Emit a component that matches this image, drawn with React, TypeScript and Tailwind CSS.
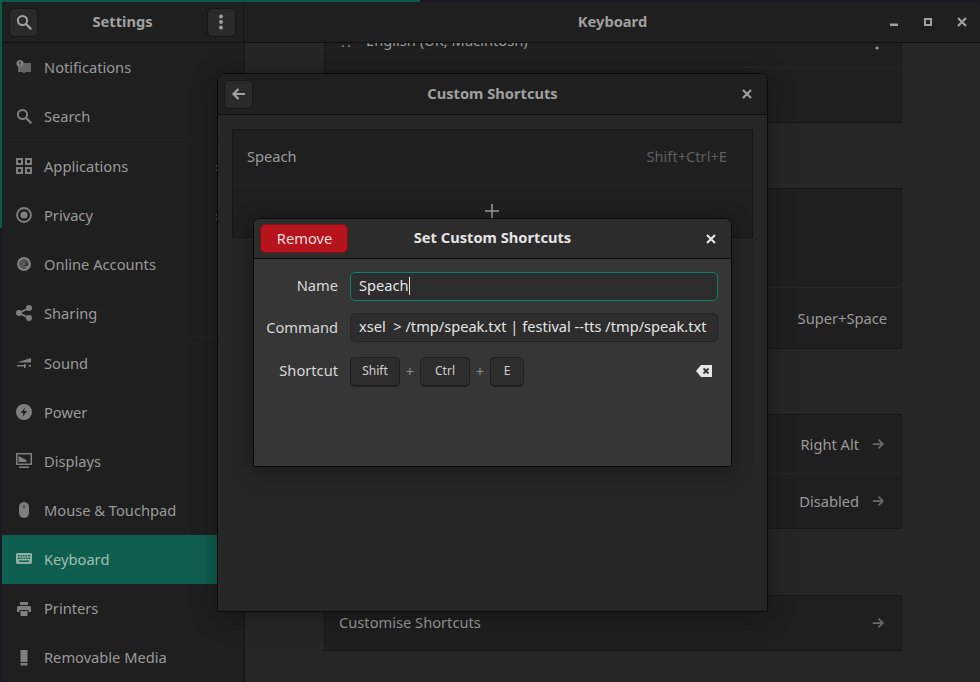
import React from 'react';

const Ico = ({ children, className = 'w-4 h-4' }: { children: React.ReactNode; className?: string }) => (
  <svg viewBox="0 0 16 16" className={className} fill="currentColor">
    {children}
  </svg>
);

const SearchIco = () => (
  <Ico>
    <circle cx="6.5" cy="6.5" r="4.6" fill="none" stroke="currentColor" strokeWidth="2" />
    <path d="M10 10l4.6 4.6" stroke="currentColor" strokeWidth="2.2" strokeLinecap="round" />
  </Ico>
);

const ArrowRight = ({ className = 'w-4 h-4' }: { className?: string }) => (
  <Ico className={className}>
    <path d="M2 8h11M8.500 3l5 5-5 5" fill="none" stroke="currentColor" strokeWidth="2" />
  </Ico>
);

const ArrowLeft = ({ className = 'w-4 h-4' }: { className?: string }) => (
  <Ico className={className}>
    <path d="M14 8H3M7.500 3l-5 5 5 5" fill="none" stroke="currentColor" strokeWidth="2.200" />
  </Ico>
);

const CloseIco = ({ className = 'w-3 h-3' }: { className?: string }) => (
  <svg viewBox="0 0 12 12" className={className}>
    <path d="M2 2l8 8M10 2l-8 8" stroke="currentColor" strokeWidth="2.200" />
  </svg>
);

const icons: Record<string, React.ReactNode> = {
  Notifications: (
    <Ico>
      <path d="M2 3h13v9H9.500L8 13.500 6.500 12H2z" opacity="0.75" />
      <circle cx="4" cy="3.500" r="3.500" />
      <path d="M3.500 1.500h1v2.600h-1zM3.500 4.700h1v1h-1z" fill="#1f1f1f" />
    </Ico>
  ),
  Search: <SearchIco />,
  Applications: (
    <Ico>
      <path
        fillRule="evenodd"
        d="M0 0h7v7H0zM2 2v3h3V2zM9 0h7v7H9zM11 2v3h3V2zM0 9h7v7H0zM2 11v3h3v-3zM9 9h7v7H9zM11 11v3h3v-3z"
      />
    </Ico>
  ),
  Privacy: (
    <Ico>
      <circle cx="8" cy="8" r="7" fill="none" stroke="currentColor" strokeWidth="1.800" />
      <circle cx="8" cy="8" r="3.600" />
    </Ico>
  ),
  'Online Accounts': (
    <Ico>
      <circle cx="8" cy="8" r="7" />
      <circle cx="8" cy="8" r="2" fill="none" stroke="#1f1f1f" strokeWidth="1" />
      <path d="M10 6v3c0 1.400 2 1 2-1a4 4 0 1 0-2 3.500" fill="none" stroke="#1f1f1f" strokeWidth="1" />
    </Ico>
  ),
  Sharing: (
    <Ico>
      <circle cx="3" cy="8" r="3" />
      <circle cx="13" cy="3" r="3" />
      <circle cx="13" cy="13" r="3" />
      <path d="M3 8l10-5M3 8l10 5" stroke="currentColor" strokeWidth="1.800" />
    </Ico>
  ),
  Sound: (
    <Ico>
      <path d="M1 7.500L15 3v4.500zM1 10h9v1.600H1zM8 9h1.500v4H8zM12.500 10H15v1.600h-2.500z" />
    </Ico>
  ),
  Power: (
    <Ico>
      <path
        fillRule="evenodd"
        d="M8 0a8 8 0 1 1 0 16A8 8 0 0 1 8 0zM9.500 3L4.800 9h2.600l-1 4 4.800-6H7.900z"
      />
    </Ico>
  ),
  Displays: (
    <Ico>
      <path fillRule="evenodd" d="M0 0h16v12H0zM1.500 1.500v9h13v-9z" />
      <path d="M2.500 3l8 4v2h-8zM3 13.500h10V15H3z" />
    </Ico>
  ),
  'Mouse & Touchpad': (
    <Ico>
      <rect x="3" y="0" width="10" height="16" rx="5" />
      <rect x="7.500" y="3" width="1" height="3" fill="#1f1f1f" />
    </Ico>
  ),
  Keyboard: (
    <Ico>
      <path
        fillRule="evenodd"
        d="M1.500 2h13A1.500 1.500 0 0 1 16 3.500v8a1.500 1.500 0 0 1-1.500 1.500h-13A1.500 1.500 0 0 1 0 11.500v-8A1.500 1.500 0 0 1 1.500 2zM2 4v1.500h1.500V4zM4.500 4v1.500H6V4zM7 4v1.500h1.500V4zM9.500 4v1.500H11V4zM12 4v1.500h2V4zM2 6.500V8h2V6.500zM5 6.500V8h1.500V6.500zM7.500 6.500V8H9V6.500zM10 6.500V8h1.500V6.500zM12.500 6.500V8H14V6.500zM3 9.500V11h10V9.500z"
      />
    </Ico>
  ),
  Printers: (
    <Ico>
      <path d="M4 1h8v3H4zM2.500 5h11A1.500 1.500 0 0 1 15 6.500V11h-2.500V9h-9v2H1V6.500A1.500 1.500 0 0 1 2.500 5zM4.500 10h7v5h-7z" />
    </Ico>
  ),
  'Removable Media': (
    <Ico>
      <path d="M4.500 0h7v12h-7zM4.500 13h7v1.500a1 1 0 0 1-1 1h-5a1 1 0 0 1-1-1z" />
    </Ico>
  ),
};

const items = [
  { name: 'Notifications', up: true },
  { name: 'Search', sep: true },
  { name: 'Applications', more: true },
  { name: 'Privacy', more: true },
  { name: 'Online Accounts' },
  { name: 'Sharing', sep: true },
  { name: 'Sound' },
  { name: 'Power' },
  { name: 'Displays' },
  { name: 'Mouse & Touchpad' },
  { name: 'Keyboard', active: true },
  { name: 'Printers', up: true },
  { name: 'Removable Media', up: true },
];

const HeaderButton = ({ children, className = '' }: { children: React.ReactNode; className?: string }) => (
  <div
    className={`w-[29px] h-[29px] rounded-[5px] bg-[#2a2a2a] border border-[#171717] flex items-center justify-center text-[#a0a0a0] ${className}`}
  >
    {children}
  </div>
);

const Row = ({ h, label, value, arrow, border = true }: { h: string; label?: string; value?: string; arrow?: boolean; border?: boolean }) => (
  <div className={`flex items-center justify-between pl-[14px] ${arrow ? 'pr-[16px]' : 'pr-[14px]'} ${h} ${border ? 'border-b border-[#262626]' : ''}`}>
    <span className="-mt-[2px]">{label}</span>
    <span className="flex items-center gap-[12px] pl-[1px]">
      {value}
      {arrow && <ArrowRight className="w-[14px] h-[14px] text-[#6a6a6a]" />}
    </span>
  </div>
);

const KeyCap = ({ label, w }: { label: string; w: string }) => (
  <div
    className={`${w} h-[30px] rounded-[5px] bg-[#2d2d2d] border border-[#1f1f1f] border-b-2 flex items-center justify-center pb-[1px] text-[12px] text-[#d0d0d0]`}
  >
    {label}
  </div>
);

export default function App() {
  return (
    <div className="relative w-[980px] h-[682px] overflow-hidden bg-[#1a1a20] font-['Noto_Sans',sans-serif] text-[14.67px] text-[#9a9a9a]">
      <div className="absolute left-0 top-0 w-[420px] h-[2px] bg-[#0a5a4a]" />
      <div className="absolute left-0 top-0 w-[2px] h-[228px] bg-[#0a5a4a]" />

      {/* main window */}
      <div className="relative ml-[2px] mt-[2px] h-[680px] flex flex-col rounded-t-[8px] overflow-hidden bg-[#262626]">
        <header className="h-[41px] shrink-0 flex bg-[#1f1f1f] border-b border-[#0e0e0e]">
          <div className="w-[242px] shrink-0 flex items-center justify-between px-[7px] border-r border-[#141414]">
            <HeaderButton>
              <SearchIco />
            </HeaderButton>
            <span className="font-bold text-[#a0a0a0] -mt-[2px]">Settings</span>
            <HeaderButton>
              <svg viewBox="0 0 16 16" className="w-4 h-4" fill="currentColor">
                <circle cx="8" cy="2.500" r="1.900" />
                <circle cx="8" cy="8" r="1.900" />
                <circle cx="8" cy="13.500" r="1.900" />
              </svg>
            </HeaderButton>
          </div>
          <div className="flex-1 flex items-center justify-center relative pl-[1px]">
            <span className="font-bold text-[#a0a0a0] -mt-[2px]">Keyboard</span>
            <div className="absolute right-[12px] top-[14px] flex items-center gap-[22px] text-[#a0a0a0]">
              <svg viewBox="0 0 12 12" className="w-3 h-3">
                <rect x="2" y="7.500" width="8" height="2.500" fill="currentColor" />
              </svg>
              <svg viewBox="0 0 12 12" className="w-3 h-3">
                <rect x="3" y="3" width="6" height="6" fill="none" stroke="currentColor" strokeWidth="2" />
              </svg>
              <CloseIco />
            </div>
          </div>
        </header>

        <div className="flex-1 flex min-h-0">
          <aside className="w-[243px] shrink-0 bg-[#1f1f1f] border-r border-[#141414] flex flex-col">
            {items.map((it) => (
              <div
                key={it.name}
                className={`h-[49.2px] shrink-0 flex items-center pl-[14px] pr-[24px] ${it.active ? 'bg-[#0f5f50] text-[#a3bdb5]' : ''} ${it.sep ? 'border-b border-[#232323]' : ''}`}
              >
                <span className={it.active ? 'text-[#8fb0a6]' : 'text-[#7f7f7f]'}>{icons[it.name]}</span>
                <span className={`ml-[12px] flex-1 ${it.up ? '-mt-[2px]' : ''}`}>{it.name}</span>
                {it.more && <span className="text-[#8a8a8a]">›</span>}
              </div>
            ))}
          </aside>

          <main className="flex-1 min-w-0 overflow-hidden pl-[79px] pr-[78px]">
            <div className="-mt-[30px] h-[110px] bg-[#1f1f1f] border border-[#171717] flex flex-col">
              <div className="h-[54px] flex items-center justify-between pl-[14px] pr-[21px] border-b border-[#262626]">
                <span className="flex items-center gap-[13px] -mt-[2px]">
                  <svg viewBox="0 0 14 14" className="w-[14px] h-[14px]" fill="#6a6a6a">
                    <circle cx="4" cy="3" r="1.200" />
                    <circle cx="10" cy="3" r="1.200" />
                    <circle cx="4" cy="8" r="1.200" />
                    <circle cx="10" cy="8" r="1.200" />
                    <circle cx="4" cy="13" r="1.200" />
                    <circle cx="10" cy="13" r="1.200" />
                  </svg>
                  English (UK, Macintosh)
                </span>
                <svg viewBox="0 0 6 18" className="w-[6px] h-[18px] text-[#a0a0a0]" fill="currentColor">
                  <circle cx="3" cy="2" r="1.500" />
                  <circle cx="3" cy="9" r="1.500" />
                  <circle cx="3" cy="16" r="1.500" />
                </svg>
              </div>
            </div>
            <div className="mt-[65px] h-[161px] bg-[#1f1f1f] border border-[#171717] flex flex-col">
              <Row h="h-[99px]" />
              <Row h="flex-1" value="Super+Space" border={false} />
            </div>
            <div className="mt-[65px] h-[115px] bg-[#1f1f1f] border border-[#171717] flex flex-col">
              <Row h="h-[59px]" value="Right Alt" arrow />
              <Row h="flex-1" value="Disabled" arrow border={false} />
            </div>
            <div className="mt-[66px] h-[56px] bg-[#1f1f1f] border border-[#171717] flex flex-col">
              <Row h="flex-1" label="Customise Shortcuts" arrow border={false} />
            </div>
          </main>
        </div>
      </div>

      {/* Custom Shortcuts dialog */}
      <div className="absolute left-[217px] top-[73px] w-[551px] h-[539px] rounded-t-[7px] border border-[#0a0a0a] bg-[#262626] shadow-[0_4px_24px_rgba(0,0,0,0.35)] overflow-hidden flex flex-col">
        <div className="h-[41px] shrink-0 grid grid-cols-[1fr_auto_1fr] items-center pl-[6px] pr-[6px] bg-[#1f1f1f] border-b border-[#0e0e0e]">
          <HeaderButton>
            <ArrowLeft />
          </HeaderButton>
          <span className="font-bold text-[#a0a0a0] -mt-[3px]">Custom Shortcuts</span>
          <div className="flex justify-end pr-[8px] text-[#a0a0a0]">
            <CloseIco />
          </div>
        </div>
        <div className="px-[14px] pt-[14px]">
          <div className="h-[109px] bg-[#1f1f1f] border border-[#171717] flex flex-col">
            <div className="h-[55px] flex items-center justify-between pl-[14px] pr-[25px] border-b border-[#222222]">
              <span className="-mt-[2px]">Speach</span>
              <span className="text-[#5f5f5f] -mt-[2px]">Shift+Ctrl+E</span>
            </div>
            <div className="flex-1 flex justify-center pt-[19px] pr-[1px] text-[#a0a0a0]">
              <svg viewBox="0 0 14 14" className="w-[14px] h-[14px]">
                <path d="M7 0v14M0 7h14" stroke="currentColor" strokeWidth="1.500" />
              </svg>
            </div>
          </div>
        </div>
      </div>

      {/* Set Custom Shortcuts dialog */}
      <div className="absolute left-[253px] top-[218px] w-[479px] h-[249px] rounded-t-[7px] border border-[#0a0a0a] bg-[#363636] shadow-[0_4px_20px_rgba(0,0,0,0.4)] overflow-hidden flex flex-col text-[#d8d8d8]">
        <div className="h-[40px] shrink-0 grid grid-cols-[1fr_auto_1fr] items-center px-[6px] bg-[#2c2c2c] border-b border-[#0e0e0e]">
          <div className="w-[88px] h-[29px] rounded-[5px] bg-[#b5141c] border border-[#7c1016] flex items-center justify-center pb-[2px] pl-[1px] text-[#f0dcdc]">
            Remove
          </div>
          <span className="font-bold text-[#e4e4e4] -mt-[3px]">Set Custom Shortcuts</span>
          <div className="flex justify-end pr-[8px] text-[#e4e4e4]">
            <CloseIco />
          </div>
        </div>
        <div className="grid grid-cols-[84px_368px] gap-x-[12px] items-center pt-[13px]">
          <span className="text-right -mt-[3px]">Name</span>
          <div className="h-[29px] rounded-[5px] bg-[#2d2d2d] border border-[#12806a] flex items-center pl-[8px] pb-[4px] text-[#e4e4e4]">
            <span>Speach</span>
            <span className="w-px h-[18px] bg-[#e4e4e4] mt-[3px]" />
          </div>
          <span className="text-right mt-[10px]">Command</span>
          <div className="mt-[12px] h-[29px] rounded-[5px] bg-[#2d2d2d] border border-[#242424] flex items-center pl-[8px] pb-[2px] text-[14.6px] text-[#e4e4e4] whitespace-pre">
            {'xsel  > /tmp/speak.txt | festival --tts /tmp/speak.txt'}
          </div>
          <span className="text-right mt-[10px]">Shortcut</span>
          <div className="mt-[15px] flex items-center">
            <KeyCap label="Shift" w="w-[50px]" />
            <span className="w-[20px] text-center text-[#8a8a8a] -mt-[2px]">+</span>
            <KeyCap label="Ctrl" w="w-[50px]" />
            <span className="w-[20px] text-center text-[#8a8a8a] -mt-[2px]">+</span>
            <KeyCap label="E" w="w-[34px]" />
            <svg viewBox="0 0 16 12" className="w-[16px] h-[12px] ml-auto mr-[6px] -mt-[2px]">
              <path d="M5 0h11v12H5L0 6z" fill="#e6e6e6" />
              <path d="M7.500 3.500l5 5M12.500 3.500l-5 5" stroke="#363636" strokeWidth="1.800" />
            </svg>
          </div>
        </div>
      </div>
    </div>
  );
}
